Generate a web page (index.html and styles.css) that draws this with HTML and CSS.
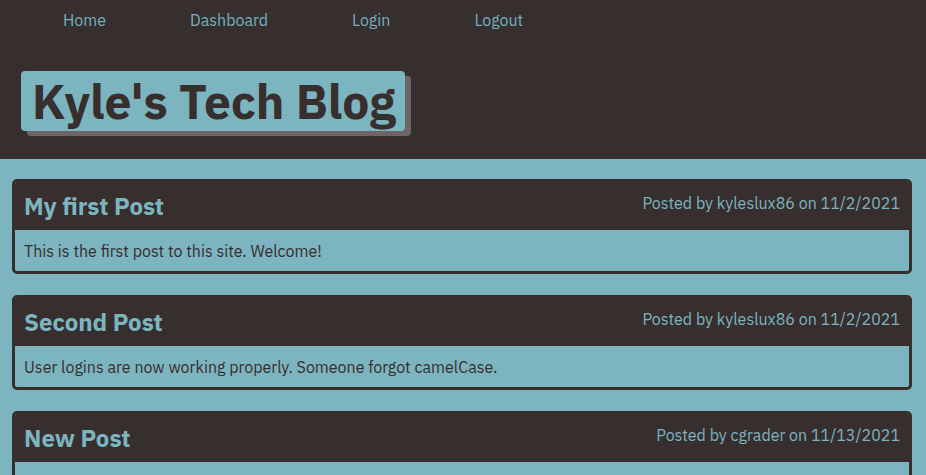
FILE: index.html
```html
<!DOCTYPE html>
<html>
<head>
<meta charset="utf-8">
<link rel="stylesheet" href="styles.css">
</head>
<body>
<header class="site-header">
  <nav class="nav">
    <a href="#">Home</a>
    <a href="#">Dashboard</a>
    <a href="#">Login</a>
    <a href="#">Logout</a>
  </nav>
  <div class="title-wrap">
    <h1 class="title">Kyle's Tech Blog</h1>
  </div>
</header>
<main class="posts">
  <article class="post">
    <div class="post-head">
      <h2>My first Post</h2>
      <span class="meta">Posted by kyleslux86 on 11/2/2021</span>
    </div>
    <div class="post-body">This is the first post to this site. Welcome!</div>
  </article>
  <article class="post">
    <div class="post-head">
      <h2>Second Post</h2>
      <span class="meta">Posted by kyleslux86 on 11/2/2021</span>
    </div>
    <div class="post-body">User logins are now working properly. Someone forgot camelCase.</div>
  </article>
  <article class="post">
    <div class="post-head">
      <h2>New Post</h2>
      <span class="meta">Posted by cgrader on 11/13/2021</span>
    </div>
    <div class="post-body">Testing new post creation.</div>
  </article>
</main>
</body>
</html>
```
FILE: styles.css
```css
html, body {
  margin: 0;
  padding: 0;
}
body {
  background: #7cb4c0;
  font-family: "IBM Plex Sans", "Noto Sans", "Open Sans", sans-serif;
  color: #372e2e;
  font-size: 16px;
}
.site-header {
  background: #372e2e;
  height: 159px;
  box-sizing: border-box;
}
.nav {
  display: flex;
  gap: 84px;
  padding-left: 63px;
  height: 40px;
  align-items: center;
}
.nav a {
  color: #74afc0;
  text-decoration: none;
  font-size: 16px;
}
.title-wrap {
  padding: 31px 0 0 21px;
  display: flex;
}
.title {
  margin: 0;
  background: #7cb4c0;
  color: #372e2e;
  font-size: 48px;
  font-weight: 700;
  line-height: 60px;
  padding: 0 9px 0 11px;
  border-radius: 4px;
  box-shadow: 6px 5px 0 #6e6666;
}
.posts {
  padding: 20px 14px 0 12px;
  display: flex;
  flex-direction: column;
  gap: 21px;
}
.post {
  border: 3px solid #372e2e;
  border-radius: 5px;
  overflow: hidden;
}
.post-head {
  background: #372e2e;
  display: flex;
  justify-content: space-between;
  align-items: center;
  height: 48px;
  padding: 0 9px 0 9px;
}
.post-head h2 {
  margin: 0;
  color: #7cb4c0;
  font-size: 24px;
  font-weight: 700;
  padding-top: 0;
}
.meta {
  color: #7cb4c0;
  font-size: 16px;
  align-self: flex-start;
  padding-top: 11px;
}
.post-body {
  padding: 11px 9px 9px;
  height: 21px;
  font-size: 16px;
  color: #372e2e;
}
```
